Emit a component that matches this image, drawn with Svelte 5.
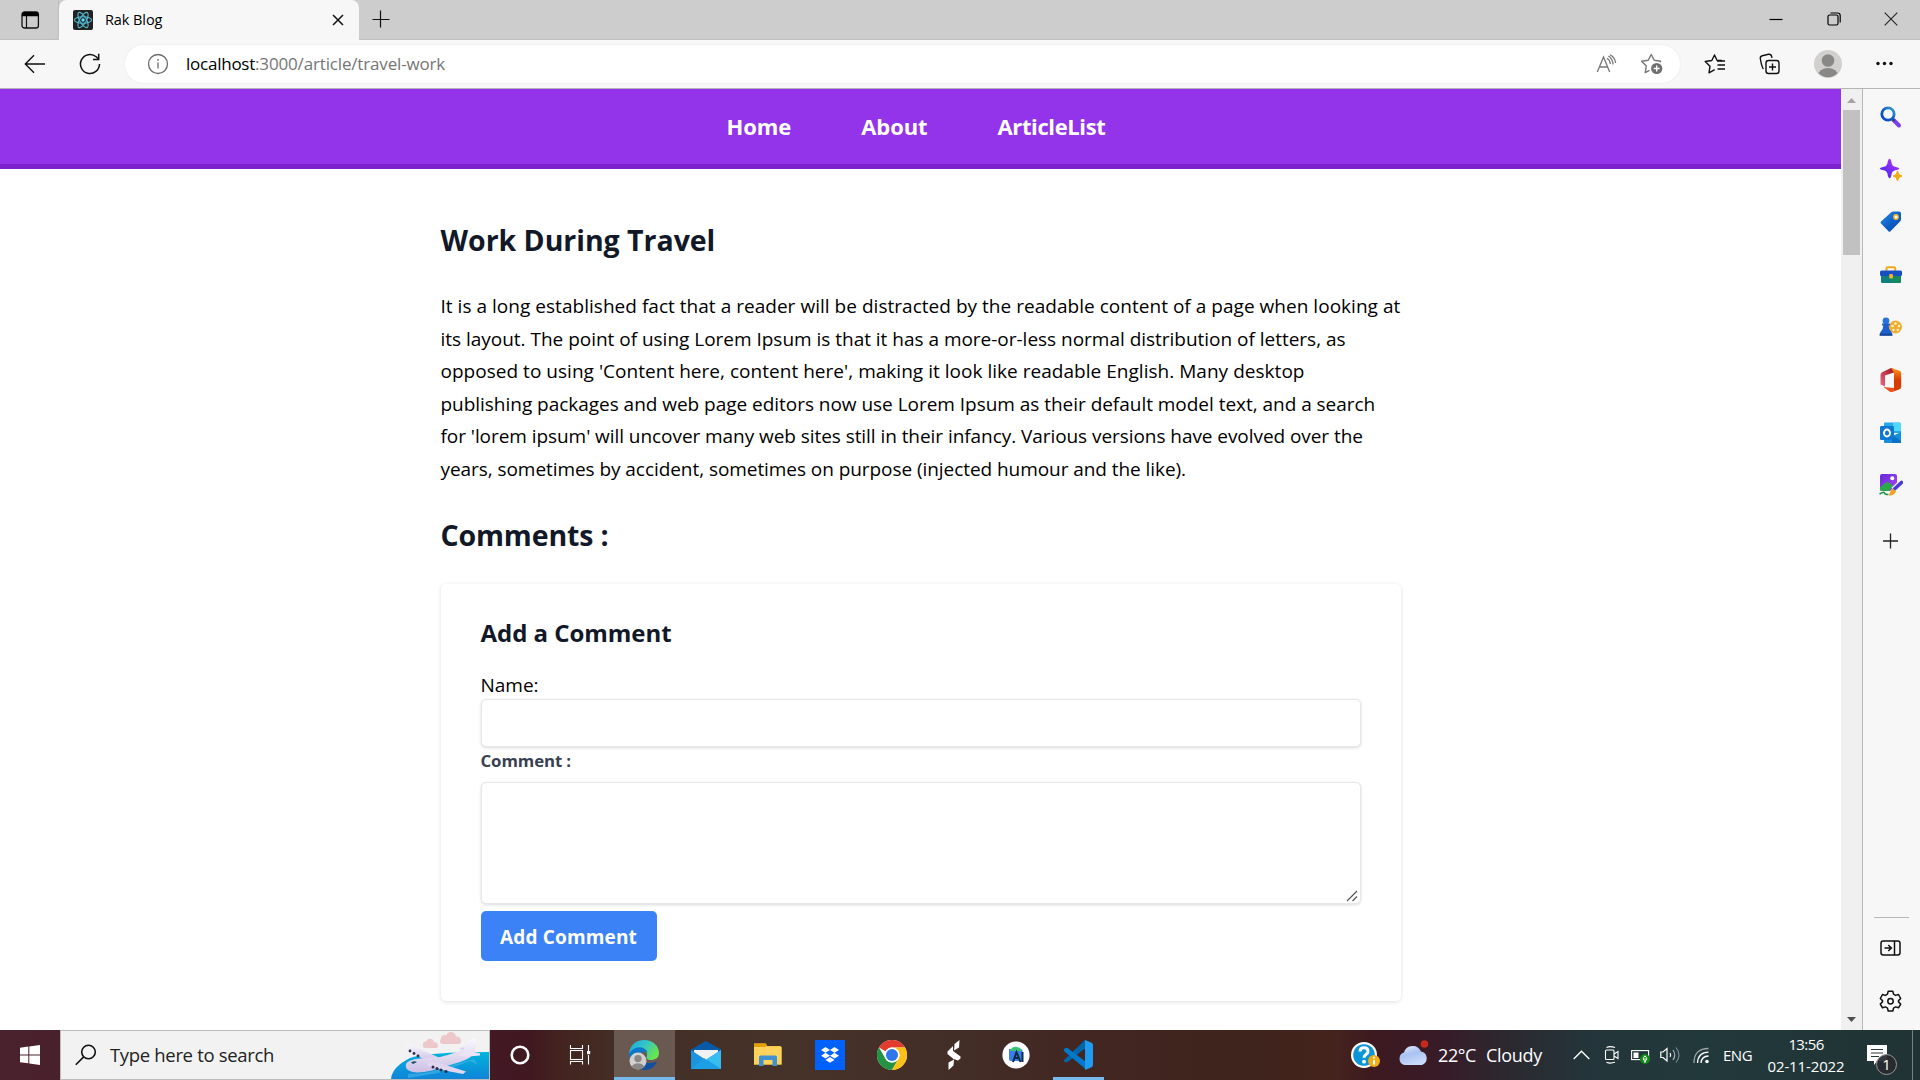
<script>
  const links = ['Home', 'About', 'ArticleList'];
  const lines = [
    'It is a long established fact that a reader will be distracted by the readable content of a page when looking at',
    'its layout. The point of using Lorem Ipsum is that it has a more-or-less normal distribution of letters, as',
    "opposed to using 'Content here, content here', making it look like readable English. Many desktop",
    'publishing packages and web page editors now use Lorem Ipsum as their default model text, and a search',
    "for 'lorem ipsum' will uncover many web sites still in their infancy. Various versions have evolved over the",
    'years, sometimes by accident, sometimes on purpose (injected humour and the like).'
  ];
</script>

<div class="screen">
  <!-- Tab strip -->
  <header class="tabs">
    <div class="tab-actions">
      <svg width="20" height="20" viewBox="0 0 20 20"><rect x="2" y="2" width="16.4" height="16" rx="2.6" fill="none" stroke="#111" stroke-width="1.3" /><path d="M2 6.3V4.5Q2 2 4.6 2H16Q18.400 2 18.400 4.500V6.300Z" fill="#000" /><path d="M6.500 6V18" stroke="#111" stroke-width="1.200" /></svg>
    </div>
    <div class="tab">
      <svg class="favicon" width="20" height="20" viewBox="0 0 20 20"><rect width="20" height="20" rx="2" fill="#222" /><g fill="none" stroke="#54bcd6" stroke-width="1.100"><ellipse cx="10" cy="10" rx="8.600" ry="3.300" /><ellipse cx="10" cy="10" rx="8.600" ry="3.300" transform="rotate(60 10 10)" /><ellipse cx="10" cy="10" rx="8.600" ry="3.300" transform="rotate(120 10 10)" /></g><circle cx="10" cy="10" r="1.700" fill="#61dafb" /></svg>
      <span class="tab-title">Rak Blog</span>
      <svg class="tab-close" width="12" height="12" viewBox="0 0 12 12"><path d="M1 1L11 11M11 1L1 11" stroke="#111" stroke-width="1.500" /></svg>
    </div>
    <svg class="new-tab" width="18" height="18" viewBox="0 0 18 18"><path d="M8.500 .5V17.500M.5 9.500H17.500" stroke="#111" stroke-width="1.200" /></svg>
    <div class="window-buttons">
      <svg width="14" height="14" viewBox="0 0 14 14"><path d="M.5 7.500H13.500" stroke="#000" stroke-width="1.200" /></svg>
      <svg width="14" height="14" viewBox="0 0 14 14"><rect x="1" y="3" width="10" height="10" rx="1.500" fill="none" stroke="#000" stroke-width="1.200" /><path d="M3.500 1H10.500Q13.200 1 13.200 3.700V10.500" fill="none" stroke="#000" stroke-width="1.200" /></svg>
      <svg width="14" height="14" viewBox="0 0 14 14"><path d="M.7 .7L13.300 13.300M13.300 .7L.7 13.300" stroke="#222" stroke-width="1.100" /></svg>
    </div>
  </header>

  <!-- Toolbar -->
  <div class="toolbar">
    <svg class="back" width="22" height="20" viewBox="0 0 22 20"><path d="M21 10H1.500M10 1.300L1.300 10L10 18.700" fill="none" stroke="#111" stroke-width="1.400" /></svg>
    <svg class="reload" width="22" height="22" viewBox="0 0 22 22"><path d="M20.500 11A9.500 9.500 0 1 1 17.200 3.800L19.500 6" fill="none" stroke="#111" stroke-width="1.500" /><path d="M19.700 .8V6.500H14" fill="none" stroke="#111" stroke-width="1.500" /></svg>
    <div class="address">
      <svg class="info" width="22" height="22" viewBox="0 0 22 22"><circle cx="11" cy="11" r="9.500" fill="none" stroke="#6b6b6b" stroke-width="1.300" /><path d="M11 9.500V15.500" stroke="#6b6b6b" stroke-width="1.300" /><circle cx="11" cy="6.800" r=".9" fill="#6b6b6b" /></svg>
      <span class="host">localhost</span><span class="path">:3000/article/travel-work</span>
      <svg class="read" width="22" height="20" viewBox="0 0 22 20"><g fill="none" stroke="#777" stroke-width="1.300"><path d="M1.300 18L7.500 3L13.700 18M3.400 13H11.600" /><path d="M11 4.300Q14 6 14.300 10M12.300 2Q16.700 4.500 17 10.500M14 .8Q19 3.500 19.600 9" /></g></svg>
      <svg class="favourite" width="24" height="22" viewBox="0 0 24 22"><path d="M20 9.400L20.600 8.300L14.200 7.300L11.200 1.500L8.200 7.300L1.600 8.300L6.300 13L5.200 19.600L9.500 17.400" fill="none" stroke="#777" stroke-width="1.400" stroke-linejoin="round" /><circle cx="16.700" cy="15.500" r="5.600" fill="#6e6e6e" /><path d="M16.700 12.500V18.500M13.700 15.500H19.700" stroke="#fff" stroke-width="1.400" /></svg>
    </div>
    <svg class="favs" width="22" height="20" viewBox="0 0 22 20"><g fill="none" stroke="#111" stroke-width="1.400" stroke-linejoin="round"><path d="M18 6.500L13 6.300L10.500 1L7.800 6.500L1.200 7.500L6 12.200L5 18.800L10.700 15.700" /><path d="M13 7H21M13.500 11H21M13.500 15H21" /></g></svg>
    <svg class="collections" width="22" height="22" viewBox="0 0 22 22"><g fill="none" stroke="#111" stroke-width="1.400"><rect x="7" y="7.500" width="13" height="13" rx="2.500" /><path d="M13.500 10.500V17.500M10 14H17" /><path d="M4.300 16Q2.500 13 1.300 5.500Q1 3.200 3.300 2.700L9.500 1.300Q12.200 .9 12.700 3.600L13 4.800" /></g></svg>
    <svg class="profile" width="28" height="28" viewBox="0 0 28 28"><clipPath id="head"><circle cx="14" cy="14" r="13.200" /></clipPath><circle cx="14" cy="14" r="14" fill="#d2d0ce" /><circle cx="14" cy="10.500" r="6.300" fill="#8a8886" /><ellipse cx="14" cy="25.500" rx="10" ry="7.500" fill="#8a8886" clip-path="url(#head)" /></svg>
    <svg class="more" width="17" height="5" viewBox="0 0 17 5"><g fill="#111"><circle cx="2" cy="2.500" r="1.700" /><circle cx="8.500" cy="2.500" r="1.700" /><circle cx="15" cy="2.500" r="1.700" /></g></svg>
  </div>

  <!-- Page with scrollbar and browser sidebar -->
  <div class="body">
    <main class="page">
      <nav>{#each links as link}<a href="#top">{link}</a>{/each}</nav>
      <article>
        <h1>Work During Travel</h1>
        <p class="copy">{#each lines as line}<span>{line}</span>{/each}</p>
        <h2>Comments :</h2>
        <form class="card">
          <h3>Add a Comment</h3>
          <label class="name" for="name">Name:</label>
          <input id="name" type="text" />
          <label class="comment" for="comment">Comment :</label>
          <div class="area">
            <textarea id="comment"></textarea>
            <svg class="grip" width="12" height="12" viewBox="0 0 12 12"><path d="M1 11L11 1M6.500 11L11 6.500" stroke="#555" stroke-width="1.200" /></svg>
          </div>
          <button type="button">Add Comment</button>
        </form>
      </article>
    </main>
    <div class="scrollbar">
      <svg width="9" height="5" viewBox="0 0 9 5"><path d="M0 5L4.500 0L9 5Z" fill="#a3a3a3" /></svg>
      <div class="thumb"></div>
      <svg class="down" width="9" height="5" viewBox="0 0 9 5"><path d="M0 0L4.500 5L9 0Z" fill="#505050" /></svg>
    </div>
    <aside>
      <svg viewBox="0 0 24 24"><defs><linearGradient id="lens" x1="1" y1="0" x2="0" y2="1"><stop offset="0" stop-color="#3ba0d8" /><stop offset=".5" stop-color="#0f5fc4" /><stop offset="1" stop-color="#0b3fd0" /></linearGradient></defs><path d="M14.500 15L20 20.500" stroke="#7b3ff2" stroke-width="4" stroke-linecap="round" /><path d="M13.500 14L15.500 16" stroke="#3c3c50" stroke-width="2.400" /><circle cx="9" cy="9" r="6.200" fill="#f4f9ff" stroke="url(#lens)" stroke-width="2.800" /></svg>
      <svg viewBox="0 0 24 24"><defs><linearGradient id="spark" x1="0" y1="1" x2="1" y2="0"><stop offset="0" stop-color="#3a2fe0" /><stop offset=".5" stop-color="#7a2cf5" /><stop offset="1" stop-color="#c23cf5" /></linearGradient></defs><path d="M10.500 .8Q12 .8 12.700 5.500Q13.200 8 16 8.700Q20.300 9.600 20.300 10.500Q20.300 11.500 16 12.300Q13.200 13 12.700 15.500Q12 20.300 10.500 20.300Q9.200 20.300 8.400 15.500Q7.900 13 5 12.300Q.8 11.500 .8 10.500Q.8 9.600 5 8.700Q7.900 8 8.400 5.500Q9.200 .8 10.500 .8Z" fill="url(#spark)" /><path d="M18.500 13L19.900 16.600L23 18L19.900 19.400L18.500 23L17.100 19.400L14 18L17.100 16.600Z" fill="#f2ab10" stroke="#f2ab10" stroke-linejoin="round" /></svg>
      <svg viewBox="0 0 24 24"><defs><linearGradient id="tag" x1="0" y1="0" x2="1" y2="1"><stop offset="0" stop-color="#2f8be6" /><stop offset=".6" stop-color="#0a5bc4" /><stop offset="1" stop-color="#1748b0" /></linearGradient></defs><path d="M12 2.500Q13 1.500 14.500 1.500H20Q22 1.500 22 3.500V9Q22 10.500 21 11.500L11.500 21.200Q10.500 22.200 9.500 21.200L2 13.500Q1 12.500 2 11.500Z" fill="url(#tag)" /><circle cx="17" cy="7" r="2.200" fill="#fff" stroke="#f5b51c" stroke-width="1.400" /></svg>
      <svg viewBox="0 0 24 24"><path d="M7.500 8V5.500Q7.500 4.300 8.700 4.300H15Q16.200 4.300 16.200 5.500V8" fill="none" stroke="#f0a91c" stroke-width="2" /><path d="M2 12H22V18.500Q22 20 20.500 20H3.500Q2 20 2 18.500Z" fill="#0d7f7c" /><path d="M12 12H22V18.500Q22 20 20.500 20H12Z" fill="#148a5e" /><path d="M1 9Q1 7.500 2.500 7.500H21.500Q23 7.500 23 9V11.500Q23 13 21.500 13H2.500Q1 13 1 11.500Z" fill="#164fc2" /><rect x="10.200" y="11" width="3.800" height="4.600" rx="1" fill="#f4b02c" /></svg>
      <svg viewBox="0 0 24 24"><circle cx="16.500" cy="12" r="6.500" fill="#efad2e" /><g fill="#fff3cf"><circle cx="16.500" cy="8.500" r="1.200" /><circle cx="20" cy="11" r="1.200" /><circle cx="18.800" cy="15" r="1.200" /><circle cx="14.500" cy="15" r="1.200" /><circle cx="13.500" cy="11" r="1.200" /></g><circle cx="7" cy="5.800" r="3.400" fill="#2a72dc" /><path d="M3 8.500H11V10.500H9.700Q9.800 14.500 11.800 16Q13.300 17 13.300 20.500H.7Q.7 17 2.200 16Q4.200 14.500 4.300 10.500H3Z" fill="#1d5fcc" /><path d="M.7 18.700H13.300V20.700H.7Z" fill="#174396" /></svg>
      <svg viewBox="0 0 24 24"><defs><linearGradient id="o1" x1="0" y1="1" x2="1" y2="0"><stop offset="0" stop-color="#e56a8e" /><stop offset="1" stop-color="#9f1417" /></linearGradient><linearGradient id="o2" x1="0" y1="0" x2="0" y2="1"><stop offset="0" stop-color="#ff9a1a" /><stop offset=".5" stop-color="#d83b01" /><stop offset="1" stop-color="#d83b01" /></linearGradient></defs><path d="M12 0L3.500 4Q1.500 5 1.500 7V16.500L6 18.500V7.500L15 4.500V1Z" fill="url(#o1)" /><path d="M12 0L20 2.500Q22.200 3.300 22.200 5V19Q22.200 20.600 20 21.500L13 24L15 20V4.500Z" fill="url(#o2)" /><path d="M4.500 19L15 20V23L12.500 24Q11.500 24 10.500 23.500Z" fill="#f0501c" /></svg>
      <svg viewBox="0 0 24 24"><path d="M6 1.500H20.500Q22 1.500 22 3V12H5V2.500Q5 1.500 6 1.500Z" fill="#28a8ea" /><path d="M14 2H22V10H14Z" fill="#50d9ff" /><path d="M5 11L13.500 15L22 11V21Q22 22 21 22H6Q5 22 5 21Z" fill="#1490df" /><path d="M13 14L22 20V22H13Z" fill="#0f6fc0" /><rect x="1" y="5" width="14" height="14" rx="1.200" fill="#0f78d4" /><ellipse cx="8" cy="12" rx="3" ry="3.500" fill="none" stroke="#fff" stroke-width="1.900" /></svg>
      <svg viewBox="0 0 24 24"><defs><linearGradient id="sky" x1="0" y1="0" x2="1" y2="1"><stop offset="0" stop-color="#6428d9" /><stop offset="1" stop-color="#a94af2" /></linearGradient></defs><path d="M3 1H16Q18 1 18 3V12L11 18H3Q1 18 1 16V3Q1 1 3 1Z" fill="url(#sky)" /><path d="M1 14.500L6.500 9.800Q8.500 8.500 10.500 9.800L14 13L10 18H3Q1 18 1 16Z" fill="#2aa84c" /><circle cx="13.300" cy="5.300" r="2" fill="#fff" /><path d="M22.500 9.500L14.500 17" stroke="#f7f7f7" stroke-width="6" /><path d="M22.500 9.500L15.500 16" stroke="#4a3ad8" stroke-width="3.600" stroke-linecap="round" /><path d="M14 15.500L17 18.500Q15 23 10 22.500Q11 17.500 14 15.500Z" fill="#f3a21d" /><path d="M.5 21Q5 18.300 5.500 20T9.500 21.500" fill="none" stroke="#1d9448" stroke-width="1.500" /></svg>
      <svg class="add" viewBox="0 0 24 24"><path d="M11.500 4.500V19.500M4 12H19" stroke="#222" stroke-width="1.300" /></svg>
      <hr />
      <svg viewBox="0 0 24 24"><rect x="2" y="5" width="19" height="14" rx="2.200" fill="none" stroke="#111" stroke-width="1.500" /><path d="M15.500 5V19M5.500 12H12M9.300 9L12.300 12L9.300 15" fill="none" stroke="#111" stroke-width="1.500" /></svg>
      <svg viewBox="0 0 24 24"><path d="M9.200 2.200H13.800L14.500 5.200L16.600 6.400L19.500 5.500L21.700 9.500L19.500 11.600V12.900L21.700 15L19.500 18.800L16.600 17.900L14.500 19.100L13.800 22H9.200L8.500 19.100L6.400 17.900L3.500 18.800L1.300 15L3.500 12.900V11.600L1.300 9.500L3.500 5.500L6.400 6.400L8.500 5.200Z" fill="none" stroke="#111" stroke-width="1.500" stroke-linejoin="round" /><circle cx="11.500" cy="12.200" r="2.700" fill="none" stroke="#111" stroke-width="1.500" /></svg>
    </aside>
  </div>

  <!-- Taskbar -->
  <footer>
    <div class="start"><svg width="20" height="20" viewBox="0 0 20 20"><path d="M0 2.800L8.300 1.600V9.500H0ZM9.300 1.400L20 0V9.500H9.300ZM0 10.500H8.300V18.300L0 17.200ZM9.300 10.500H20V20L9.300 18.500Z" fill="#fff" /></svg></div>
    <div class="search">
      <svg width="22" height="22" viewBox="0 0 22 22"><circle cx="13.500" cy="8" r="6.800" fill="none" stroke="#111" stroke-width="1.600" /><path d="M8.700 12.900L.8 20.800" stroke="#111" stroke-width="1.600" /></svg>
      <span>Type here to search</span>
      <svg class="plane" width="99" height="48" viewBox="0 0 99 48">
        <defs><linearGradient id="sea" x1="0" y1="0" x2="0" y2="1"><stop offset="0" stop-color="#00b4dc" /><stop offset="1" stop-color="#1184d8" /></linearGradient><linearGradient id="hull" x1="0" y1="0" x2="0" y2="1"><stop offset="0" stop-color="#fbf8ff" /><stop offset="1" stop-color="#cbbfe4" /></linearGradient></defs>
        <path d="M1 48Q2 36 20 27Q40 21 99 21V48Z" fill="url(#sea)" />
        <path d="M18 43Q40 43 62 34L84 28L88 34L80 30L48 42L18 47Z" fill="#48b8e8" opacity=".6" />
        <g fill="#ecc8ca"><circle cx="36" cy="13.500" r="3" /><circle cx="40" cy="11.500" r="3.800" /><circle cx="45" cy="13.800" r="2.600" /><rect x="33" y="13" width="15" height="4" rx="2" /><circle cx="55" cy="8" r="4" /><circle cx="61" cy="6" r="5" /><circle cx="67" cy="9" r="3.500" /><rect x="50" y="7.500" width="21" height="5.500" rx="2.700" /></g>
        <path d="M16 13Q20 13 24 15.500L48 26L38 31L20 20Z" fill="url(#hull)" />
        <path d="M69 17L76 16L82 20L76 21Z" fill="#d9cfec" />
        <path d="M16 33Q18 28.500 30 27.500L50 26Q66 22 74 18Q77 9 83 7.500Q87 7.500 86 13L85 21Q82 27 70 31L42 39.500Q24 43.500 18 39Q15 37 16 33Z" fill="url(#hull)" />
        <path d="M68 24Q76 19 90 22.500V24.500L78 25.500Z" fill="#ebe4f6" />
        <path d="M37 32Q43 29 49 32L76 40.500L73 43L60 40.500L38 35Z" fill="#e0d7ef" />
        <path d="M21 31.500Q24 29.500 27 31L23 33Z" fill="#1b4f62" />
        <g fill="#2e2c4e"><circle cx="20" cy="20" r="1.400" /><circle cx="24" cy="22.500" r="1.400" /><circle cx="28" cy="25" r="1.400" /><circle cx="43" cy="36" r="1.500" /><circle cx="47" cy="37.500" r="1.500" /><circle cx="51" cy="39" r="1.500" /><circle cx="56" cy="40.500" r="1.500" /></g>
      </svg>
    </div>
    <div class="apps">
      <div class="app"><svg viewBox="0 0 30 30"><circle cx="15" cy="15" r="8.300" fill="none" stroke="#fff" stroke-width="2.600" /></svg></div>
      <div class="app"><svg viewBox="0 0 30 30"><g fill="none" stroke="#fff" stroke-width="1.100"><rect x="4.500" y="10.500" width="12" height="9" /><path d="M4.500 5V8.500H16.500V5M4.500 24.500V21.500H16.500V24.500M22.500 5V11M22.500 15V24.500" /></g><rect x="21" y="11" width="3.200" height="3.200" fill="#fff" /></svg></div>
      <div class="app active"><svg viewBox="0 0 30 30"><defs><linearGradient id="edge" x1="0" y1="0" x2="1" y2=".5"><stop offset="0" stop-color="#1ca8dc" /><stop offset=".5" stop-color="#31c5cb" /><stop offset="1" stop-color="#67e450" /></linearGradient></defs><path d="M0 14C1 5 7 0 15 0C24 0 30 6 30 13C30 18 26 20 22 20C18 20 17 18 18 16C19 13 16 9 11 8.500C6 8 2 10 0 14Z" fill="url(#edge)" /><path d="M0 14Q4 7 11 7.300Q17 8 18.500 12.500Q15 11 12 13L7 23Q0 20 0 14Z" fill="#0c76cc" /><path d="M12 14Q11 20 17 22.500Q22 24 28 21.500Q25 30 15 30Q8 29 6 24Z" fill="#124f9e" /><circle cx="9" cy="21" r="8.500" fill="#d2d0ce" /><circle cx="9" cy="18.600" r="3.700" fill="#8a8886" /><path d="M2.800 26.500Q5 23.300 9 23.300T15.200 26.500Q13 29.300 9 29.300T2.800 26.500Z" fill="#8a8886" /></svg></div>
      <div class="app"><svg viewBox="0 0 30 30"><path d="M0 9.500L15 1L30 9.500V15H0Z" fill="#075aa8" /><path d="M3 10H27V20H3Z" fill="#f2f2f2" /><path d="M0 10L15 20L30 10V29H0Z" fill="#1c93dd" /><path d="M15 19.500L30 10V29Z" fill="#38bdf2" /><path d="M0 29L13 18L15 19.500L30 29Z" fill="#1d9fe6" /></svg></div>
      <div class="app"><svg viewBox="0 0 30 30"><path d="M1 3.500H12.500L14 6H27Q28.500 6 28.500 7.500V24.500H1Z" fill="#f9c647" /><path d="M1 3.500H12.500L14 5L12.500 7H1Z" fill="#e59f05" /><path d="M1 7H28.500V24.500H1Z" fill="#ffd25c" /><path d="M6 26V17Q6 15.500 7.500 15.500H22.500Q24 15.500 24 17V26H19.500V20H10.500V26Z" fill="#3f91d2" /></svg></div>
      <div class="app"><svg viewBox="0 0 30 30"><rect width="30" height="30" fill="#0061fe" /><path d="M10.500 7L15 9.900L19.500 7L24 9.900L19.500 12.800L24 15.700L19.500 18.600L15 15.700L10.500 18.600L6 15.700L10.500 12.800L6 9.900ZM15 9.900L10.500 12.800L15 15.700L19.500 12.800ZM10.500 19.900L15 17L19.500 19.900L15 22.800Z" fill="#fff" fill-rule="evenodd" /></svg></div>
      <div class="app"><svg viewBox="0 0 30 30"><circle cx="15" cy="15" r="15" fill="#fff" /><path d="M2 7.500A15 15 0 0 1 28 7.500H15A7.500 7.500 0 0 0 8.500 11.300Z" fill="#e33b2e" /><path d="M2 7.500A15 15 0 0 0 15 30L21.500 18.700A7.500 7.500 0 0 1 8.500 18.700Z" fill="#229342" /><path d="M28 7.500A15 15 0 0 1 15 30L21.500 18.700A7.500 7.500 0 0 0 21.500 11.200L18 7.500Z" fill="#fbc116" /><circle cx="15" cy="15" r="7.500" fill="#fff" /><circle cx="15" cy="15" r="6" fill="#2f78ec" /></svg></div>
      <div class="app"><svg viewBox="0 0 30 30"><g fill="#fff"><path d="M20.500 0L20 7.500L15 10.500L15.500 4Z" /><path d="M14 6L8.500 11.500V14L14.500 19L19 20.500L21.500 18.500V16.500L14 11Z" /><path d="M9.500 30V22.500L15 19.500L14.500 25.500Z" /></g></svg></div>
      <div class="app"><svg viewBox="0 0 30 30"><circle cx="15" cy="15" r="13.600" fill="#fff" /><path d="M8 9H19.500Q21.500 9 21.500 11V21H10Q8 21 8 19Z" fill="#3c7bf0" /><path d="M9 10Q13 4.500 19 8L21 11H9Z" fill="#36c776" /><path d="M12 22L15.500 12L19.500 22M13.500 18H18M21.500 12V22" fill="none" stroke="#073042" stroke-width="2" /></svg></div>
      <div class="app code"><svg viewBox="0 0 30 30"><path d="M1 20L22 0V8.500L4.500 22Q3 23 1.500 21.800Q.2 20.800 1 20Z" fill="#0065a9" /><path d="M1 9.500Q2.500 7 4.500 8L22.500 21.500V29L1.200 11.300Q.2 10.300 1 9.500Z" fill="#007acc" /><path d="M22 0L28.500 2.800Q30 3.500 30 5V25Q30 26.500 28.500 27.200L22 30Z" fill="#1f9cf0" /></svg></div>
    </div>
    <div class="tray">
      <svg class="help" width="30" height="30" viewBox="0 0 30 30"><circle cx="14" cy="15" r="13" fill="#fff" /><circle cx="14" cy="15" r="10.800" fill="#0b94d8" /><path d="M10 11.500Q10 7.800 14 7.800T18 11.300Q18 13.300 16 14.500Q14 15.700 14 17.800" fill="none" stroke="#fff" stroke-width="3" /><circle cx="14" cy="21.700" r="1.900" fill="#fff" /><circle cx="24" cy="21" r="6" fill="#f2ae18" /><path d="M24 20V24.500M24 16.700V18.500" stroke="#fff" stroke-width="2" /></svg>
      <svg class="cloud" width="31" height="30" viewBox="0 0 31 30"><defs><linearGradient id="cl" x1="0" y1="0" x2=".4" y2="1"><stop offset="0" stop-color="#e6edfc" /><stop offset=".5" stop-color="#a9c2f2" /><stop offset="1" stop-color="#c9dafa" /></linearGradient></defs><path d="M6.500 25A6.500 6.500 0 0 1 6 12.500A9 9 0 0 1 23 11.500A7 7 0 0 1 24 25Z" fill="url(#cl)" /><circle cx="26.500" cy="4" r="3.800" fill="#c42b1c" /></svg>
      <span class="temp">22°C</span><span class="sky">Cloudy</span>
      <svg class="caret" width="17" height="10" viewBox="0 0 17 10"><path d="M.7 9L8.500 1.200L16.300 9" fill="none" stroke="#fff" stroke-width="1.300" /></svg>
      <svg class="meet" width="16" height="18" viewBox="0 0 16 18"><g fill="none" stroke="#fff" stroke-width="1.100"><rect x="1.500" y="4" width="8.500" height="9.500" rx="1" /><path d="M10 8L14 5.500V12.500L10 10M2.500 1.500Q6 -.2 11 1.500M2.500 16.300Q6 17.900 11 16.300" /></g></svg>
      <svg class="battery" width="20" height="18" viewBox="0 0 20 18"><rect x=".6" y="4.600" width="17" height="9" fill="none" stroke="#fff" stroke-width="1.100" /><rect x="2.500" y="6.500" width="5" height="5.500" fill="#fff" /><circle cx="14" cy="13" r="5" fill="#108a16" /><path d="M14 9.800Q17.500 13 14 15.500Q10.500 13 14 9.800ZM14 12V17" fill="none" stroke="#fff" stroke-width="1" /></svg>
      <svg class="sound" width="21" height="18" viewBox="0 0 21 18"><g fill="none" stroke="#fff" stroke-width="1.200"><path d="M.8 6H3L7 2.500V15L3 11.500H.8Z" /><path d="M10 7Q11.500 9 10 11" /><path d="M13 4Q16.500 9 13 14" opacity=".6" /><path d="M16 1.500Q22 9 16 16.500" opacity=".4" /></g></svg>
      <svg class="wifi" width="17" height="17" viewBox="0 0 17 17"><g fill="none" stroke="#fff" stroke-width="1.300"><path d="M1 16Q1 1.500 15.500 1.500" opacity=".55" /><path d="M4.500 16Q5 5.500 15.500 5.200" /><path d="M8 16Q8.500 9.200 15.500 9" /></g><circle cx="14" cy="14.500" r="1.800" fill="#fff" /></svg>
      <span class="lang">ENG</span>
      <div class="clock"><span class="time">13:56</span><span class="date">02-11-2022</span></div>
      <div class="notice">
        <svg width="20" height="20" viewBox="0 0 20 20"><path d="M0 0H20V16H10L7 20V16H0Z" fill="#fff" /><path d="M4 4.500H16M4 8H16M4 11.500H12" stroke="#243a3c" stroke-width="1.100" /></svg>
        <span class="badge">1</span>
      </div>
      <div class="peek"></div>
    </div>
  </footer>
</div>

<style>
  :global(body) { margin: 0; overflow: hidden; }
  .screen { width: 1920px; height: 1080px; display: flex; flex-direction: column; overflow: hidden; background: #fff; color: #000; font-family: "Open Sans", "Segoe UI", sans-serif; }
  .screen * { box-sizing: border-box; }
  svg { display: block; flex: none; }
  span { white-space: nowrap; }

  .tabs { height: 40px; flex: none; display: flex; background: #cdcdcd; box-shadow: inset 0 -1px #c0c0c0; }
  .tab-actions { width: 59px; padding: 10px 0 0 20px; border-radius: 0 0 6px 0; border-right: 1px solid #bdbdbd; }
  .tab { width: 300px; display: flex; align-items: center; padding: 0 15px 0 14px; background: #f7f7f7; border-radius: 8px 8px 0 0; }
  .tab-title { flex: 1; margin-left: 12px; padding-bottom: 2px; font-size: 14.5px; letter-spacing: -0.08px; }
  .new-tab { margin: 10px 0 0 13px; }
  .window-buttons { display: flex; gap: 43.5px; margin: 12px 22px 0 auto; }

  .toolbar { height: 49px; flex: none; display: flex; align-items: center; padding: 0 27px 1px 24px; background: #f7f7f7; border-bottom: 1px solid #b5b5b5; }
  .reload { margin-left: 33px; }
  .address { width: 1555px; height: 38px; margin-left: 24px; display: flex; align-items: center; padding: 0 16px 0 22px; border-radius: 19px; background: #fff; box-shadow: 0 0 3px rgba(0, 0, 0, 0.06); font-size: 17px; }
  .info { margin-right: 17px; }
  .host { letter-spacing: -0.24px; }
  .path { color: #757575; letter-spacing: -0.16px; }
  .read { margin-left: auto; }
  .favourite { margin-left: 22px; }
  .favs { margin-left: 24px; }
  .collections { margin-left: 33px; }
  .profile { margin-left: 33px; }
  .more { margin-left: auto; }

  .body { height: 941px; flex: none; display: flex; }
  .page { width: 1841px; overflow: hidden; background: #fff; }
  nav { height: 80px; display: flex; justify-content: center; align-items: center; gap: 70px; padding: 0 9px 2px 0; background: #9333ea; border-bottom: 5px solid #7e22ce; }
  nav a { color: #fff; text-decoration: none; font-size: 22px; font-weight: 700; letter-spacing: -0.1px; }
  nav a:last-child { letter-spacing: -0.38px; }
  article { width: 960px; margin: 0 auto; padding-top: 51px; }
  h1, h2 { margin: 0; color: #111827; font-size: 28.5px; line-height: 40px; font-weight: 700; }
  h1 { letter-spacing: -0.03px; }
  h2 { margin-top: 30px; letter-spacing: -0.14px; }
  .copy { margin: 30px 0 0; font-size: 19px; line-height: 32.5px; }
  .copy span { display: block; letter-spacing: -0.06px; }
  .copy span:nth-child(1) { letter-spacing: 0.03px; }
  .copy span:nth-child(2) { letter-spacing: -0.018px; }
  .copy span:nth-child(3) { letter-spacing: 0.028px; }
  .copy span:nth-child(4) { letter-spacing: -0.03px; }
  .card { height: 417px; margin-top: 29px; padding: 33px 40px 0; display: flex; flex-direction: column; border-radius: 5px; background: #fff; box-shadow: 0 1px 4px rgba(0, 0, 0, 0.13); }
  h3 { margin: 0; color: #111827; font-size: 24px; line-height: 32px; font-weight: 700; letter-spacing: -0.04px; }
  .name { margin-top: 22px; font-size: 19px; line-height: 28px; }
  input, textarea { display: block; width: 100%; border: 1px solid #e5e7eb; border-radius: 5px; background: #fff; box-shadow: 0 1px 3px rgba(0, 0, 0, 0.15); outline: none; }
  input { height: 48px; flex: none; }
  .comment { margin: 1px 0 9px; color: #374151; font-size: 16.8px; line-height: 25px; font-weight: 700; letter-spacing: -0.1px; }
  .area { position: relative; height: 122px; flex: none; }
  textarea { height: 122px; resize: none; }
  .grip { position: absolute; right: 3px; bottom: 2px; }
  button { width: 176px; height: 50px; margin-top: 7px; padding: 1px 0 0; border: 0; border-radius: 5px; background: #3b82f6; color: #fff; font: 700 19px "Open Sans", "Segoe UI", sans-serif; letter-spacing: 0.16px; }

  .scrollbar { width: 21px; display: flex; flex-direction: column; align-items: center; padding: 9px 0 8px; background: #f0f0f0; }
  .thumb { width: 17px; height: 145px; margin-top: 7px; background: #c1c1c1; }
  .down { margin-top: auto; }
  aside { width: 58px; display: flex; flex-direction: column; align-items: center; padding: 16px 1px 17px 0; border-left: 1px solid #b8b8b8; background: #f7f7f7; }
  aside svg { width: 24px; height: 24px; margin-bottom: 28.600px; }
  aside .add { margin-top: 3px; }
  hr { width: 35px; height: 1px; margin: auto 0 18px; border: 0; background: #b8b8b8; }
  aside svg:last-child { margin-bottom: 0; }

  footer { height: 50px; flex: none; display: flex; background: linear-gradient(90deg, #4a222e 0, #451b27 460px, #401820 530px, #44231f 560px, #432f26 620px, #453228 800px, #432e27 950px, #422622 1090px, #3e241c 1250px, #45231d 1335px, #3d1920 1375px, #381b28 1440px, #2a2b31 1520px, #23353a 1590px, #22393b 1700px, #203234 1920px); color: #fff; }
  .start { width: 60px; display: grid; place-items: center; }
  .search { width: 430px; display: flex; align-items: center; padding: 0 0 1px 14px; border: 1px solid #bdbdbd; background: #f2f2f2; color: #222; font-size: 18.500px; letter-spacing: -0.33px; }
  .search span { margin-left: 13px; padding-bottom: 1px; }
  .plane { margin: 1px 0 0 auto; }
  .apps { display: flex; }
  .app { width: 62px; display: grid; place-items: center; }
  .app:nth-child(1), .app:nth-child(2) { width: 61px; padding-right: 1px; }
  .app svg { width: 30px; height: 30px; }
  .app.active { width: 61px; margin-left: 2px; padding-right: 1px; background: #6a5951; box-shadow: inset 0 -3px #76b9ed; }
  .code { background: linear-gradient(#76b9ed, #76b9ed) center bottom / 51px 3px no-repeat; }
  .tray { flex: 1; display: flex; align-items: center; font-size: 18px; }
  .help { margin-left: 241px; }
  .cloud { margin-left: 18px; }
  .temp { width: 48px; margin-left: 9px; letter-spacing: -0.400px; }
  .sky { width: 56px; letter-spacing: -0.300px; }
  .caret { margin-left: 31px; }
  .meet { margin-left: 14px; }
  .battery { margin-left: 11px; }
  .sound { margin-left: 9px; }
  .wifi { margin-left: 12px; }
  .lang { width: 30px; margin-left: 13px; font-size: 15px; letter-spacing: -0.500px; }
  .clock { width: 78px; margin-left: 14px; padding-bottom: 1px; display: flex; flex-direction: column; align-items: center; font-size: 15px; line-height: 22px; }
  .time { letter-spacing: -0.600px; }
  .date { letter-spacing: -0.130px; }
  .notice { position: relative; width: 20px; height: 20px; margin: 0 0 0 22px; }
  .badge { position: absolute; left: 9px; top: 9px; width: 21px; height: 21px; border: 1px solid #999; border-radius: 50%; background: rgba(40, 43, 45, 0.93); font-size: 15px; line-height: 19px; text-align: center; }
  .peek { width: 1px; height: 50px; margin-left: 25px; background: #72807f; }
</style>
